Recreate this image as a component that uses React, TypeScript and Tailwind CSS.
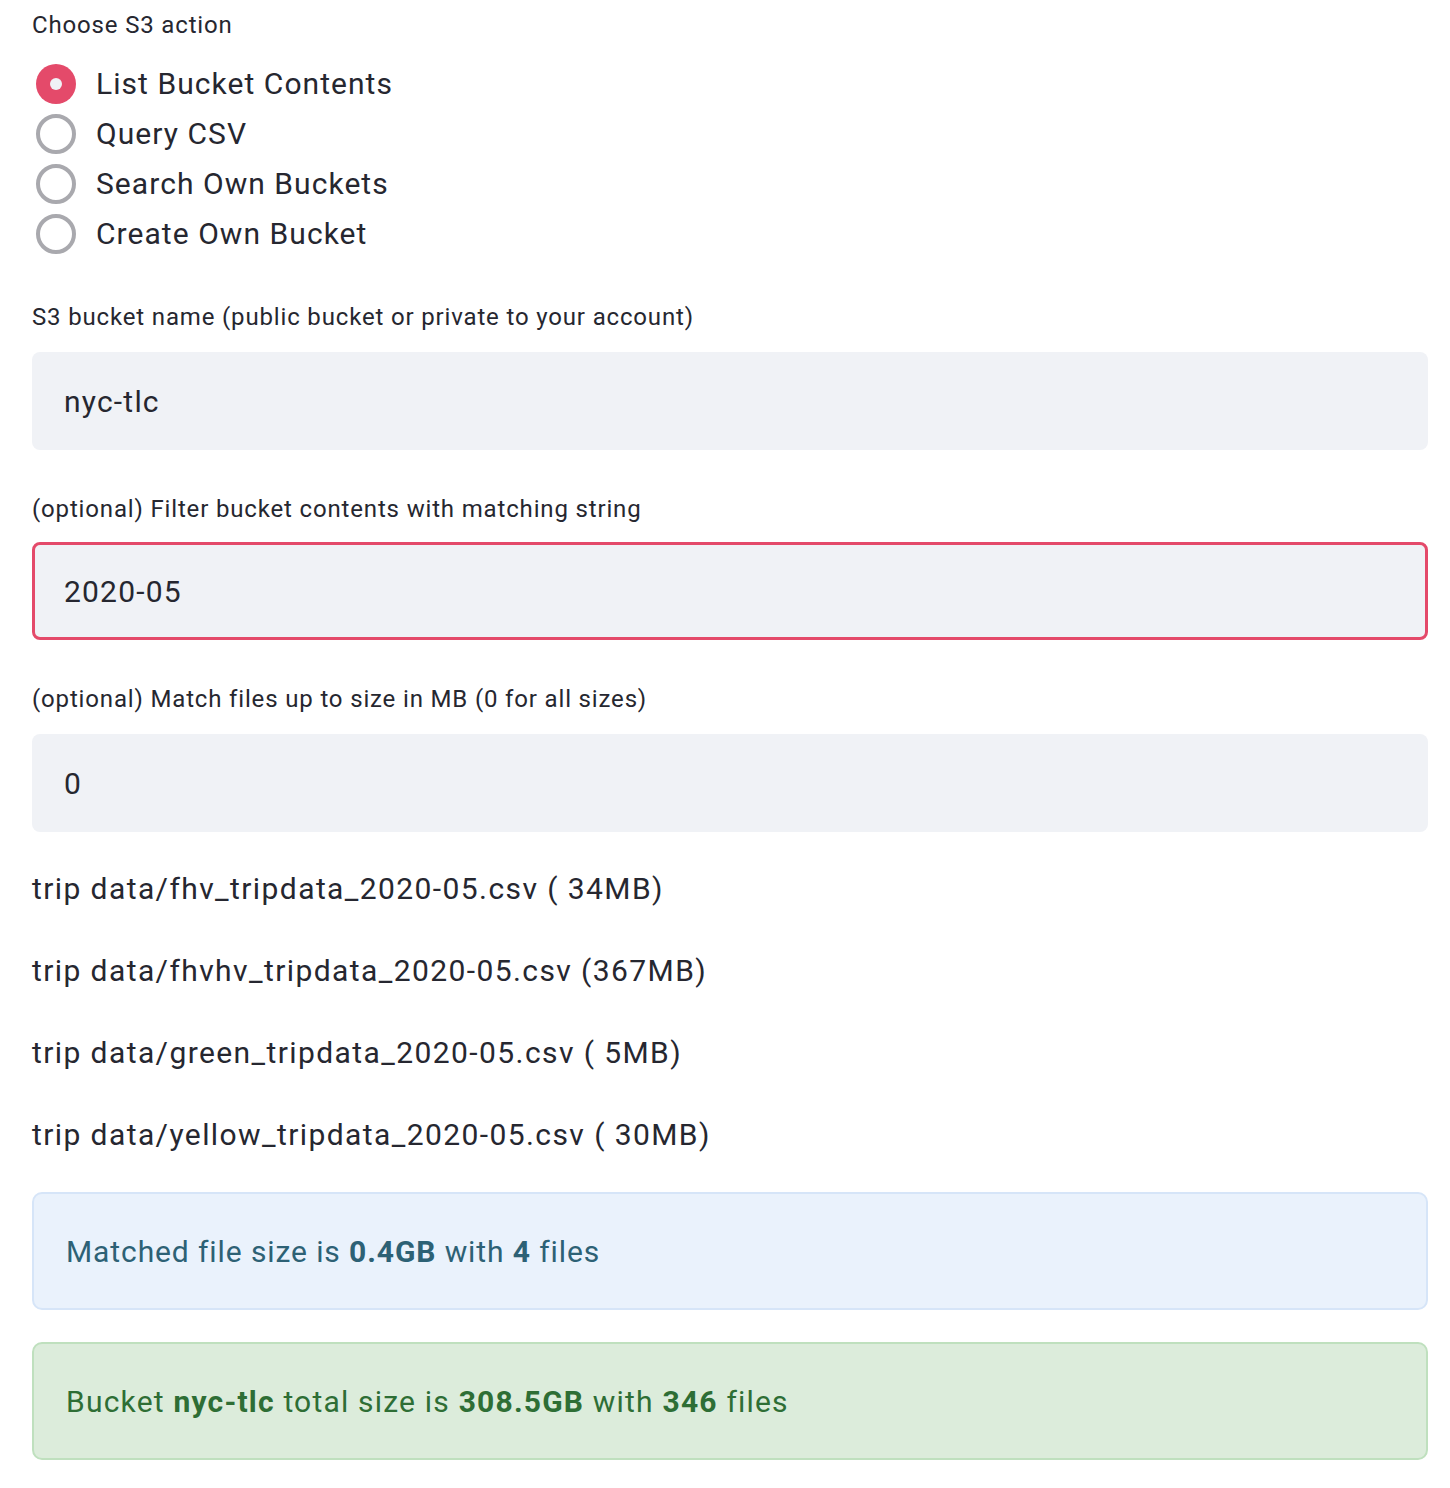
import React from "react";

const actions = [
  "List Bucket Contents",
  "Query CSV",
  "Search Own Buckets",
  "Create Own Bucket",
];

const files = [
  "trip data/fhv_tripdata_2020-05.csv ( 34MB)",
  "trip data/fhvhv_tripdata_2020-05.csv (367MB)",
  "trip data/green_tripdata_2020-05.csv ( 5MB)",
  "trip data/yellow_tripdata_2020-05.csv ( 30MB)",
];

const Label: React.FC<{ text: string; className?: string }> = ({ text, className = "" }) => (
  <div className={`text-[24px] leading-[30px] tracking-[0.035em] text-[#262730] ${className}`}>{text}</div>
);

const App: React.FC = () => {
  const selected = 0;

  return (
    <div
      className="min-h-[1488px] bg-white pl-[32px] pr-[22px] pt-[10px] text-[#262730]"
      style={{ fontFamily: "Roboto, 'Noto Sans', sans-serif" }}
    >
      {/* Action picker */}
      <Label text="Choose S3 action" />
      <div className="mt-[19px] flex flex-col">
        {actions.map((a, i) => (
          <div key={a} className="flex h-[50px] items-center">
            {i === selected ? (
              <div className="ml-[4px] flex h-[40px] w-[40px] items-center justify-center rounded-full bg-[#e44a6a]">
                <div className="h-[12px] w-[12px] rounded-full bg-[#f0f2f6]" />
              </div>
            ) : (
              <div className="ml-[4px] h-[40px] w-[40px] rounded-full border-[4px] border-[#a9a9ae]" />
            )}
            <span className="ml-[20px] text-[30px] leading-[40px] tracking-[0.035em]">{a}</span>
          </div>
        ))}
      </div>

      {/* Bucket name */}
      <Label text="S3 bucket name (public bucket or private to your account)" className="mt-[43px]" />
      <div className="mt-[20px] flex h-[98px] items-center rounded-[8px] bg-[#f0f2f6] pl-[32px] text-[30px] tracking-[0.04em]">
        nyc-tlc
      </div>

      {/* Filter */}
      <Label text="(optional) Filter bucket contents with matching string" className="mt-[44px]" />
      <div className="mt-[18px] flex h-[98px] items-center rounded-[8px] border-[3px] border-[#e44a6a] bg-[#f0f2f6] pl-[29px] text-[30px] tracking-[0.04em]">
        2020-05
      </div>

      {/* Size */}
      <Label text="(optional) Match files up to size in MB (0 for all sizes)" className="mt-[44px]" />
      <div className="mt-[20px] flex h-[98px] items-center rounded-[8px] bg-[#f0f2f6] pl-[32px] text-[30px] tracking-[0.04em]">
        0
      </div>

      {/* Results */}
      <div className="mt-[37px] flex flex-col gap-[42px]">
        {files.map((f) => (
          <div key={f} className="text-[30px] leading-[40px] tracking-[0.047em]">
            {f}
          </div>
        ))}
      </div>

      <div className="mt-[37px] flex h-[118px] items-center rounded-[10px] border-[2px] border-[#d6e5f8] bg-[#eaf2fc] pl-[32px] text-[30px] tracking-[0.03em] text-[#2d6175]">
        <span>
          Matched file size is <b>0.4GB</b> with <b>4</b> files
        </span>
      </div>

      <div className="mt-[32px] flex h-[118px] items-center rounded-[10px] border-[2px] border-[#bfe0be] bg-[#dcecdb] pl-[32px] text-[30px] tracking-[0.04em] text-[#2e6e35]">
        <span>
          Bucket <b>nyc-tlc</b> total size is <b>308.5GB</b> with <b>346</b> files
        </span>
      </div>
    </div>
  );
};

export default App;
